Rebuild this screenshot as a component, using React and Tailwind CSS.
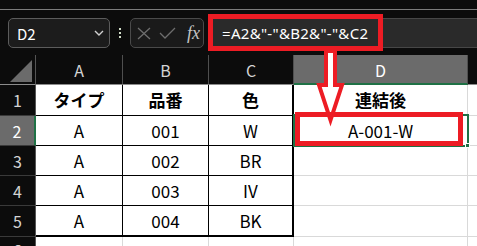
import React from "react";

const RH = "flex items-center justify-center border-b border-r border-b-[#3a3a3a] border-r-[#555555] text-[16px] text-[#d4d4d4]";
const CH = "flex items-center justify-center pt-[1px] border-b border-r border-b-[#8c8c8c] border-r-[#4f4f4f] text-[16px] text-[#d4d4d4]";
const TC = "flex items-center justify-center bg-white border-b border-r border-black text-[17px] text-black";
const GC = "bg-white border-b border-r border-[#d9d9d9]";

function Row({ n, a, b, c, d, last, bold, sel }) {
  return (
    <>
      <div className={sel ? "flex items-center justify-center border-b border-b-[#3a3a3a] border-r-2 border-r-[#1e7145] bg-[#6b6b6b] text-[16px] text-white" : RH}>{n}</div>
      <div className={`${TC} ${last ? "border-b-2" : ""} ${bold ? "font-bold" : ""}`}>{a}</div>
      <div className={`${TC} ${last ? "border-b-2" : ""} ${bold ? "font-bold" : ""}`}>{b}</div>
      <div className={`${TC} border-r-2 ${last ? "border-b-2" : ""} ${bold ? "font-bold" : ""}`}>{c}</div>
      <div className={`${GC} flex items-center justify-center text-[17px] text-black ${bold ? "font-bold" : ""}`}>{d}</div>
      <div className="bg-white border-b border-[#d9d9d9]" />
    </>
  );
}

export default function App() {
  return (
    <div className="relative w-[477px] h-[246px] overflow-hidden bg-[#0c0c0c] font-['Noto_Sans_CJK_JP',sans-serif]">
      <div className="h-[9px]" />
      <div className="h-px bg-[#7b7b7b]" />
      <div className="mt-[8px] flex h-[30px] items-stretch">
        <div className="ml-[8px] flex w-[102px] items-center justify-between rounded-[5px] border border-[#5c5c5c] bg-[#1c1c1c] pl-[8px] pr-[5px] text-[15px] text-white">
          <span className="leading-none">D2</span>
          <svg width="10" height="6" viewBox="0 0 10 6">
            <polyline points="1,1 5,5 9,1" fill="none" stroke="#d0d0d0" strokeWidth="1.4" />
          </svg>
        </div>
        <div className="flex w-[20px] flex-col items-center justify-center gap-[2px]">
          <div className="h-[2px] w-[2px] bg-[#d0dcc8]" />
          <div className="h-[2px] w-[2px] bg-[#d0dcc8]" />
          <div className="h-[2px] w-[2px] bg-[#d0dcc8]" />
        </div>
        <div className="flex w-[74px] items-center rounded-[5px] border border-[#4a4a4a] bg-[#1a1a1a] pl-[6px]">
          <svg width="14" height="13" viewBox="0 0 14 13">
            <path d="M1 1 L13 12 M13 1 L1 12" stroke="#6e6e6e" strokeWidth="1.3" fill="none" />
          </svg>
          <svg className="ml-[8px]" width="17" height="12" viewBox="0 0 17 12">
            <polyline points="1,6 6,11 16,1" stroke="#6e6e6e" strokeWidth="1.3" fill="none" />
          </svg>
          <span className="ml-[11px] font-['Liberation_Serif',serif] text-[18px] italic leading-none text-[#c4c4c4]">fx</span>
        </div>
        <div className="ml-[4px] flex flex-1 items-center border-y border-[#474747] bg-[#2a2a2a] pl-[14px] font-['Noto_Sans',sans-serif] text-[15px] tracking-[0.3px] text-white">
          =A2&amp;"-"&amp;B2&amp;"-"&amp;C2
        </div>
      </div>
      <div className="h-[7px]" />
      <div className="grid grid-cols-[36px_87px_86px_85px_174px_9px] grid-rows-[30px_31px_30px_30px_30px_31px_10px]">
        <div className="flex items-end justify-end border-b border-r border-b-[#8c8c8c] border-r-[#555555] pb-[2px] pr-[3px]">
          <div className="h-[22px] w-[22px] bg-[#6b6b6b] [clip-path:polygon(100%_0,100%_100%,0_100%)]" />
        </div>
        <div className={CH}>A</div>
        <div className={CH}>B</div>
        <div className={CH}>C</div>
        <div className="flex items-center justify-center pt-[1px] border-b-2 border-r border-b-[#1e7145] border-r-[#4f4f4f] bg-[#6b6b6b] text-[16px] text-white">D</div>
        <div className="border-b border-b-[#8c8c8c]" />

        <Row n="1" a="タイプ" b="品番" c="色" d="連結後" bold />
        <Row n="2" a="A" b="001" c="W" d="A-001-W" sel />
        <Row n="3" a="A" b="002" c="BR" />
        <Row n="4" a="A" b="003" c="IV" />
        <Row n="5" a="A" b="004" c="BK" last />

        <div className="flex items-start justify-center border-r border-r-[#555555] pt-[5px] text-[16px] leading-none text-[#d4d4d4]">6</div>
        <div className="bg-white border-r border-[#d9d9d9]" />
        <div className="bg-white border-r border-[#d9d9d9]" />
        <div className="bg-white border-r border-[#d9d9d9]" />
        <div className="bg-white border-r border-[#d9d9d9]" />
        <div className="bg-white" />
      </div>

      {/* selection of D2 */}
      <div className="pointer-events-none absolute left-[293px] top-[114px] h-[33px] w-[176px] border-2 border-[#1e7145]" />
      <div className="pointer-events-none absolute left-[465px] top-[143px] h-[5px] w-[5px] border border-white bg-[#1e7145]" />

      {/* arrow */}
      <svg className="pointer-events-none absolute left-0 top-0" width="477" height="246" viewBox="0 0 477 246">
        <polygon points="326,51 326,85 319,85 330.5,120 342,85 335,85 335,51" fill="white" stroke="#ed1c24" strokeWidth="4" strokeLinejoin="miter" />
      </svg>

      {/* red boxes */}
      <div className="pointer-events-none absolute left-[208px] top-[14px] h-[37px] w-[175px] border-[5px] border-[#ed1c24]" />
      <div className="pointer-events-none absolute left-[295px] top-[112px] h-[34px] w-[168px] border-[5px] border-[#ed1c24]" />
    </div>
  );
}
